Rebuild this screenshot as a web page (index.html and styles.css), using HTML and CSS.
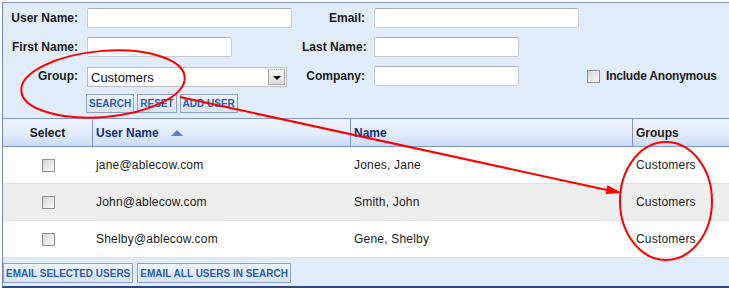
FILE: index.html
```html
<!DOCTYPE html>
<html lang="en">
<head>
  <meta charset="UTF-8">
  <meta name="viewport" content="width=device-width, initial-scale=1.0">
  <title>Users</title>
  <link rel="stylesheet" href="styles.css">
</head>
<body>
  <div class="frame">
    <!-- Search form -->
    <form class="search">
      <label class="lbl">User Name:</label>
      <input type="text" class="txt wide">
      <label class="lbl">Email:</label>
      <input type="text" class="txt wide">
      <span></span>

      <label class="lbl">First Name:</label>
      <input type="text" class="txt short">
      <label class="lbl">Last Name:</label>
      <input type="text" class="txt short">
      <span></span>

      <label class="lbl">Group:</label>
      <div class="select"><span>Customers</span><span class="drop"></span></div>
      <label class="lbl">Company:</label>
      <input type="text" class="txt short">
      <label class="anon"><input type="checkbox" class="chk"> Include Anonymous</label>

      <div class="actions">
        <button type="button" class="btn">SEARCH</button>
        <button type="button" class="btn">RESET</button>
        <button type="button" class="btn">ADD USER</button>
      </div>
    </form>

    <!-- Results -->
    <div class="users">
      <div class="row head">
        <div class="cell center">Select</div>
        <div class="cell link">User Name <span class="sort"></span></div>
        <div class="cell link">Name</div>
        <div class="cell">Groups</div>
      </div>
      <div class="row">
        <div class="cell center"><input type="checkbox" class="chk"></div>
        <div class="cell">jane@ablecow.com</div>
        <div class="cell">Jones, Jane</div>
        <div class="cell">Customers</div>
      </div>
      <div class="row alt">
        <div class="cell center"><input type="checkbox" class="chk"></div>
        <div class="cell">John@ablecow.com</div>
        <div class="cell">Smith, John</div>
        <div class="cell">Customers</div>
      </div>
      <div class="row">
        <div class="cell center"><input type="checkbox" class="chk"></div>
        <div class="cell">Shelby@ablecow.com</div>
        <div class="cell">Gene, Shelby</div>
        <div class="cell">Customers</div>
      </div>
    </div>

    <div class="foot">
      <button type="button" class="btn">EMAIL SELECTED USERS</button>
      <button type="button" class="btn">EMAIL ALL USERS IN SEARCH</button>
    </div>
  </div>

  <!-- red annotation marks drawn over the page -->
  <svg class="marks" width="729" height="288" viewBox="0 0 729 288">
    <ellipse cx="103" cy="84" rx="82" ry="33" transform="rotate(-5 103 84)" fill="none" stroke="#f00" stroke-width="2"/>
    <line x1="180" y1="97" x2="607" y2="190" stroke="#f00" stroke-width="2"/>
    <polygon points="622,193 607.4,185.2 605.5,194" fill="#f00"/>
    <ellipse cx="666" cy="201" rx="46" ry="59" fill="none" stroke="#f00" stroke-width="2"/>
  </svg>
</body>
</html>
```

FILE: styles.css
```css
body {
  margin: 0;
  font-family: "Liberation Sans", Arial, sans-serif;
  color: #1a1a1a;
  background: #ffffff;
  overflow: hidden;
  position: relative;
}

.frame {
  width: 740px;
  margin: 2px 0 0 2px;
  border-top: 1px solid #7f95d5;
  border-left: 1px solid #7088cc;
  border-bottom: 2px solid #2f4683;
}

/* search panel */
.search {
  display: grid;
  grid-template-columns: 75px 206px 63px 204px 1fr;
  grid-template-rows: repeat(3, 20px) 19px;
  column-gap: 9px;
  row-gap: 9px;
  padding: 5px 0 4px 0;
  background: #e1ecfb;
  border-bottom: 1px solid #8096d6;
  height: 116px;
  box-sizing: border-box;
  margin: 0;
}

.lbl {
  font-size: 12px;
  font-weight: bold;
  text-align: right;
  align-self: center;
  white-space: nowrap;
  color: #1b1b1b;
}

.txt {
  box-sizing: border-box;
  height: 20px;
  margin: 0;
  padding: 0 3px;
  border: 1px solid #c6cad3;
  border-top-color: #a9acb5;
  border-radius: 2px;
  background: #fff;
}

.wide {
  width: 205px;
}

.short {
  width: 145px;
}

.select {
  box-sizing: border-box;
  width: 200px;
  height: 20px;
  margin-top: 1px;
  display: flex;
  align-items: center;
  justify-content: space-between;
  padding: 0 1px 0 3px;
  border: 1px solid #b9bcc4;
  background: #fff;
  font-size: 13px;
  color: #111;
}

.drop {
  box-sizing: border-box;
  width: 17px;
  height: 16px;
  border: 1px solid #a3a3a3;
  border-top-style: dotted;
  background: linear-gradient(#f8f8f8, #dcdcdc);
  display: flex;
  align-items: flex-end;
  justify-content: center;
  padding-bottom: 4px;
}

.drop::after {
  content: "";
  border-left: 4px solid transparent;
  border-right: 4px solid transparent;
  border-top: 4px solid #000;
}

.anon {
  display: flex;
  align-items: center;
  gap: 6px;
  font-size: 12px;
  font-weight: bold;
  letter-spacing: -0.2px;
  white-space: nowrap;
  color: #1b1b1b;
}

.chk {
  appearance: none;
  -webkit-appearance: none;
  box-sizing: border-box;
  width: 13px;
  height: 13px;
  margin: 0;
  border: 1px solid #8e8f8f;
  background: linear-gradient(135deg, #d4d4d4, #fbfbfb);
}

.actions {
  grid-column: 2 / 5;
  display: flex;
  gap: 3px;
  margin: -1px 0 0 -1px;
}

.btn {
  box-sizing: border-box;
  height: 19px;
  margin: 0;
  padding: 0 2px;
  font-family: "Liberation Sans", Arial, sans-serif;
  font-size: 10px;
  font-weight: bold;
  color: #2b5cad;
  background: linear-gradient(#eef4fd, #d8e4f6);
  border: 1px solid #8fa0c8;
  cursor: pointer;
}

/* results grid */
.row {
  display: grid;
  grid-template-columns: 90px 258px 282px 1fr;
  height: 37px;
  box-sizing: border-box;
  border-bottom: 1px solid #e0e0e0;
  background: #fff;
}

.row.alt {
  background: #eeeeee;
}

.row.head {
  height: 28px;
  border-bottom: 1px solid #7b93d6;
  background: linear-gradient(#ecf3fe, #e2ecfb 55%, #c9dbf6);
}

.cell {
  display: flex;
  align-items: center;
  padding-left: 3px;
  font-size: 12px;
  letter-spacing: 0.2px;
}

.cell.center {
  justify-content: center;
  padding-left: 0;
}

.head .cell {
  box-sizing: border-box;
  border-right: 1px solid #7b93d6;
  font-weight: bold;
  letter-spacing: 0;
}

.head .link {
  color: #172d7e;
}

.sort {
  margin-left: 12px;
  border-left: 6px solid transparent;
  border-right: 6px solid transparent;
  border-bottom: 6px solid #5a7fd0;
}

.foot {
  height: 28px;
  box-sizing: border-box;
  padding-top: 5px;
  display: flex;
  gap: 4px;
  background: #e1ecfb;
}

.foot .btn {
  height: 20px;
}

.marks {
  position: absolute;
  left: 0;
  top: 0;
  pointer-events: none;
}
```
